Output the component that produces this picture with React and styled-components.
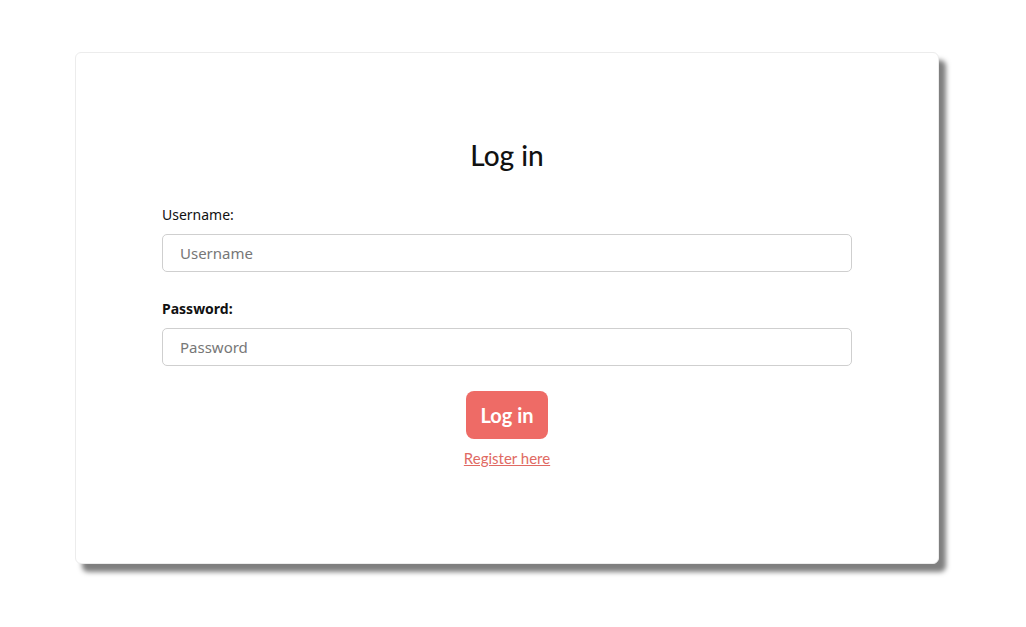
import React from 'react';
import styled, { createGlobalStyle } from 'styled-components';

const GlobalStyle = createGlobalStyle`
  html, body {
    margin: 0;
    background: #ffffff;
    font-family: "Noto Sans", "Open Sans", sans-serif;
  }
`

class App extends React.Component {
  render(){
    return(
      <Page>
        <GlobalStyle />
        <Card>
          <Title>Log in</Title>
          <Form onSubmit={e => e.preventDefault()}>
            <Label>Username:</Label>
            <Input type="text" placeholder="Username" />
            <Label bold>Password:</Label>
            <Input type="password" placeholder="Password" />
            <Actions>
              <Button type="submit">Log in</Button>
              <RegisterLink href="#">Register here</RegisterLink>
            </Actions>
          </Form>
        </Card>
      </Page>
    )
  }
};

const Page = styled.div`
  padding: 52px 0 64px 75px;
  min-height: 627px;
  box-sizing: border-box;
`
const Card = styled.div`
  box-sizing: border-box;
  width: 864px;
  height: 512px;
  background: #ffffff;
  border: 1px solid #ececec;
  border-radius: 6px;
  box-shadow: 7px 8px 5px rgba(0,0,0,0.5);
  padding: 84px 86px 0 86px;
`
const Title = styled.h1`
  margin: 0 0 32px;
  text-align: center;
  font-family: Lato, sans-serif;
  font-weight: 500;
  font-size: 28px;
  line-height: 36px;
  color: #111;
`
const Form = styled.form`
  display: flex;
  flex-direction: column;
`
const Label = styled.label`
  font-size: 14px;
  line-height: 20px;
  font-weight: ${props => props.bold ? 700 : 400};
  color: #111;
  margin-bottom: 9px;
`
const Input = styled.input`
  box-sizing: border-box;
  height: 38px;
  width: 100%;
  border: 1px solid #cfcfcf;
  border-radius: 5px;
  padding: 0 17px;
  font-family: "Noto Sans", sans-serif;
  font-size: 15px;
  color: #333;
  margin-bottom: 27px;
  &::placeholder {
    color: #777;
  }
`
const Actions = styled.div`
  display: flex;
  flex-direction: column;
  align-items: center;
  margin-top: -2px;
`
const Button = styled.button`
  width: 82px;
  height: 48px;
  border: none;
  border-radius: 8px;
  background: #ee6b66;
  color: #ffffff;
  font-family: Lato, sans-serif;
  font-weight: 700;
  font-size: 20px;
  cursor: pointer;
`
const RegisterLink = styled.a`
  margin-top: 10px;
  font-family: Lato, sans-serif;
  font-size: 15px;
  color: #e06a63;
  text-decoration: underline;
`

export default App;
